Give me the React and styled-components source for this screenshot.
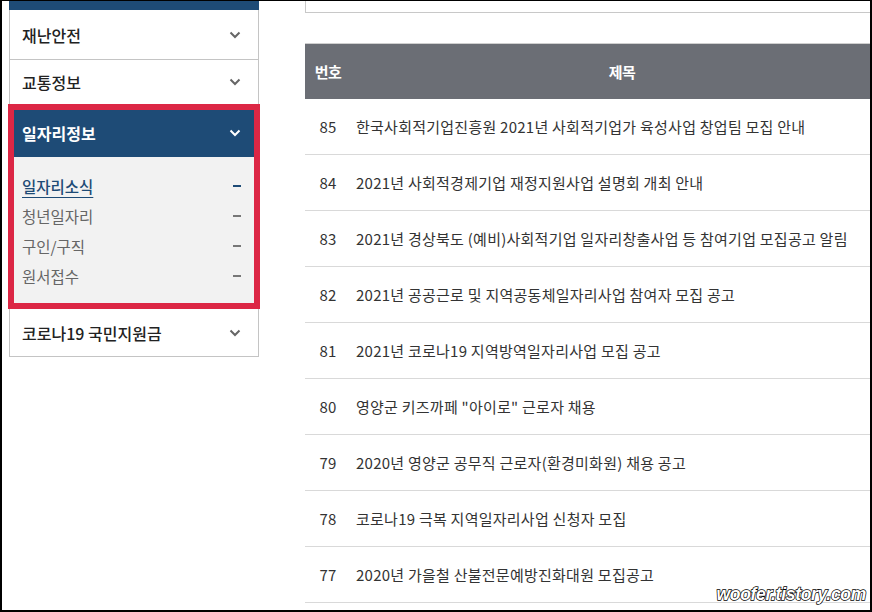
import styled, { createGlobalStyle } from 'styled-components'

const GlobalStyle = createGlobalStyle`
  * { box-sizing: border-box; }
  html, body { margin: 0; padding: 0; background: #fff; }
  body {
    font-family: "Noto Sans CJK KR", "Noto Sans", sans-serif;
    color: #333;
  }
`

const Frame = styled.div`
  position: relative;
  width: 872px;
  height: 612px;
  overflow: hidden;
  border-style: solid;
  border-color: #000;
  border-width: 1px 2px 2px 2px;
  display: flex;
  align-items: flex-start;
  padding-left: 7px;
  background: #fff;
`

const Sidebar = styled.nav`
  flex: none;
  width: 250px;
  display: flex;
  flex-direction: column;
`

const TopBar = styled.div`
  height: 9px;
  background: #1e4b76;
`

const MenuRow = styled.div`
  display: flex;
  align-items: center;
  justify-content: space-between;
  height: ${p => p.$h}px;
  padding: 0 17px 0 12px;
  border-left: 1px solid #c4c4c4;
  border-right: 1px solid #c4c4c4;
  border-bottom: ${p => (p.$noLine ? 'none' : '1px solid #c4c4c4')};
  font-size: 16px;
  font-weight: 500;
  color: #222;
`

const ActiveGroup = styled.div`
  margin: 0 -1px;
  border: 6px solid #dc2745;
`

const ActiveHead = styled.div`
  display: flex;
  align-items: center;
  justify-content: space-between;
  height: 47px;
  padding: 0 13px 2px 8px;
  background: #1e4b76;
  color: #fff;
  font-size: 16px;
  font-weight: 700;
`

const SubList = styled.ul`
  list-style: none;
  margin: 0;
  padding: 14px 13px 12px 8px;
  background: #f2f2f2;
`

const SubItem = styled.li`
  display: flex;
  align-items: center;
  justify-content: space-between;
  height: 30px;
  font-size: 15.5px;
  color: ${p => (p.$active ? '#1e4b76' : '#666')};
  font-weight: ${p => (p.$active ? 500 : 400)};

  span {
    text-decoration: ${p => (p.$active ? 'underline' : 'none')};
    text-underline-offset: 4px;
    text-decoration-thickness: 1px;
  }
`

const Dash = styled.i`
  width: 8px;
  height: 2px;
  background: ${p => (p.$active ? '#1e4b76' : '#777')};
`

const Main = styled.main`
  flex: none;
  margin-left: 46px;
  width: 600px;
`

const TopBox = styled.div`
  height: 12px;
  border-left: 1px solid #c8c8c8;
  border-bottom: 1px solid #c8c8c8;
`

const Table = styled.div`
  margin-top: 30px;
  width: 600px;
  border-top: 1px solid #cfcfcf;
`

const Row = styled.div`
  display: grid;
  grid-template-columns: 46px 554px;
  align-items: center;
  height: ${p => (p.$head ? 55 : 56)}px;
  background: ${p => (p.$head ? '#6b6e75' : '#fff')};
  color: ${p => (p.$head ? '#fff' : '#333')};
  font-weight: ${p => (p.$head ? 700 : 400)};
  border-bottom: ${p => (p.$head ? 'none' : '1px solid #d9d9d9')};
  font-size: 15px;
  letter-spacing: ${p => (p.$head ? '-0.6px' : '0.25px')};
`

const Num = styled.div`
  text-align: center;
`

const Title = styled.div`
  text-align: ${p => (p.$head ? 'center' : 'left')};
  padding-left: ${p => (p.$head ? 0 : 5)}px;
  padding-right: ${p => (p.$head ? 12 : 0)}px;
  white-space: nowrap;
`

const Watermark = styled.div`
  position: absolute;
  right: 4px;
  bottom: 5px;
  font-family: "Liberation Sans", Arial, sans-serif;
  font-size: 17.5px;
  font-weight: 700;
  font-style: italic;
  color: #fff;
  -webkit-text-stroke: 1.4px #000;
  paint-order: stroke fill;
  letter-spacing: -0.3px;
`

const Chevron = ({ color = '#666' }) => (
  <svg width="12" height="8" viewBox="0 0 12 8">
    <path d="M1.5 1.5 L6 6 L10.5 1.5" fill="none" stroke={color} strokeWidth="2" />
  </svg>
)

const posts = [
  ['85', '한국사회적기업진흥원 2021년 사회적기업가 육성사업 창업팀 모집 안내'],
  ['84', '2021년 사회적경제기업 재정지원사업 설명회 개최 안내'],
  ['83', '2021년 경상북도 (예비)사회적기업 일자리창출사업 등 참여기업 모집공고 알림'],
  ['82', '2021년 공공근로 및 지역공동체일자리사업 참여자 모집 공고'],
  ['81', '2021년 코로나19 지역방역일자리사업 모집 공고'],
  ['80', '영양군 키즈까페 "아이로" 근로자 채용'],
  ['79', '2020년 영양군 공무직 근로자(환경미화원) 채용 공고'],
  ['78', '코로나19 극복 지역일자리사업 신청자 모집'],
  ['77', '2020년 가을철 산불전문예방진화대원 모집공고'],
]

const subs = ['일자리소식', '청년일자리', '구인/구직', '원서접수']

const App = () => {
  return (
    <Frame>
      <GlobalStyle />
      <Sidebar>
        <TopBar />
        <MenuRow $h={50}>재난안전<Chevron /></MenuRow>
        <MenuRow $h={44} $noLine>교통정보<Chevron /></MenuRow>
        <ActiveGroup>
          <ActiveHead>일자리정보<Chevron color="#fff" /></ActiveHead>
          <SubList>
            {subs.map((s, i) => (
              <SubItem key={s} $active={i === 0}>
                <span>{s}</span>
                <Dash $active={i === 0} />
              </SubItem>
            ))}
          </SubList>
        </ActiveGroup>
        <MenuRow $h={48}>코로나19 국민지원금<Chevron /></MenuRow>
      </Sidebar>
      <Main>
        <TopBox />
        <Table>
          <Row $head>
            <Num $head>번호</Num>
            <Title $head>제목</Title>
          </Row>
          {posts.map(([n, t]) => (
            <Row key={n}>
              <Num>{n}</Num>
              <Title>{t}</Title>
            </Row>
          ))}
        </Table>
      </Main>
      <Watermark>woofer.tistory.com</Watermark>
    </Frame>
  )
}

export default App
